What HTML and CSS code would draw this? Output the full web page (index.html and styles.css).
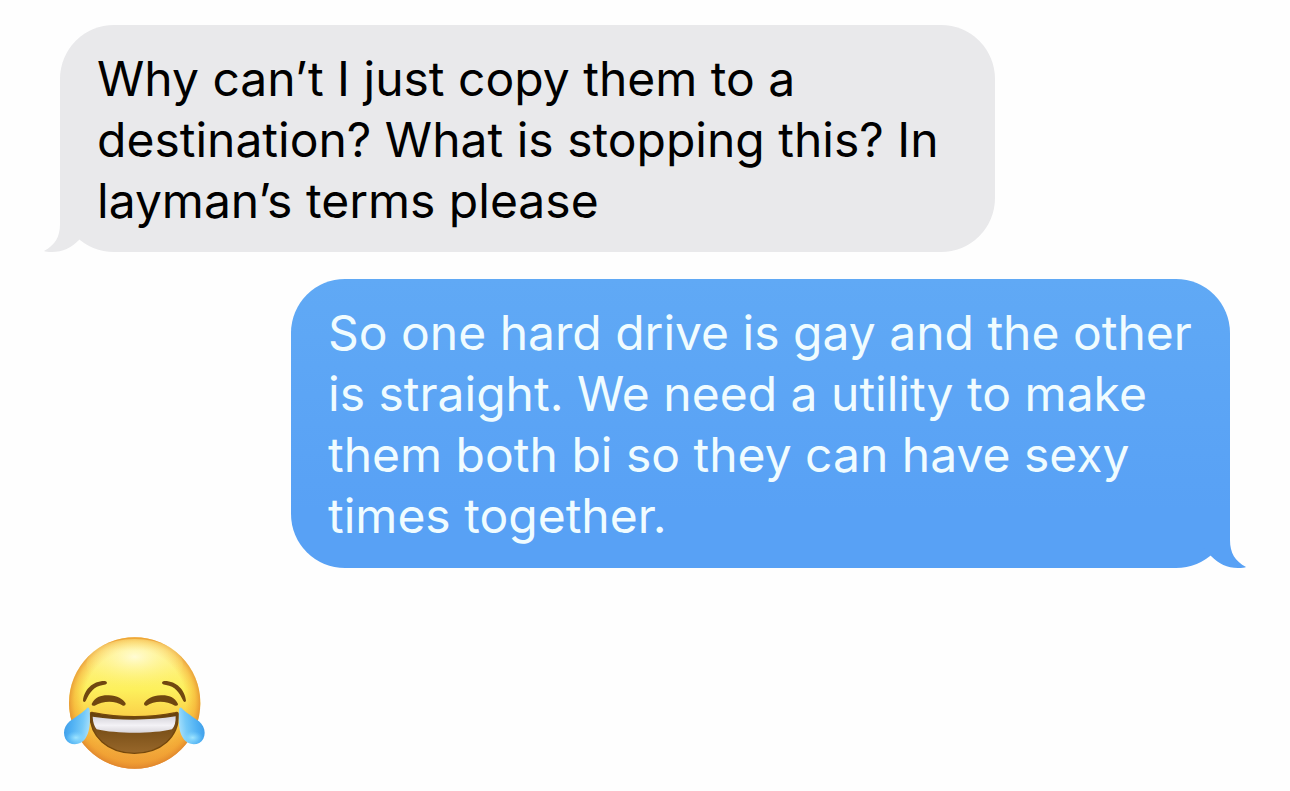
FILE: index.html
```html
<!DOCTYPE html>
<html lang="en">
<head>
<meta charset="utf-8">
<meta name="viewport" content="width=device-width, initial-scale=1">
<title>Messages</title>
<link rel="stylesheet" href="styles.css">
</head>
<body>
<main class="thread">
  <div class="bubble bubble-received">
    <p class="message">Why can’t I just copy them to a destination? What is stopping this? In layman’s terms please</p>
    <svg class="tail" viewBox="0 0 70 58" aria-hidden="true"><path d="M16 0V30C16 43 11 51 0 57Q2 58 8 58C19 58 27 54 35 46L50 30V0Z"/></svg>
  </div>
  <div class="bubble bubble-sent">
    <p class="message">So one hard drive is gay and the other is straight. We need a utility to make them both bi so they can have sexy times together.</p>
    <svg class="tail" viewBox="0 0 70 58" aria-hidden="true"><path d="M16 0V30C16 43 11 51 0 57Q2 58 8 58C19 58 27 54 35 46L50 30V0Z"/></svg>
  </div>
  <svg class="emoji" viewBox="39 30 429 411" role="img" aria-label="Face with tears of joy">
    <defs>
      <linearGradient id="face" x1="0" y1="0" x2="0" y2="1">
        <stop offset="0" stop-color="#fbd04a"/>
        <stop offset=".1" stop-color="#fff391"/>
        <stop offset=".4" stop-color="#fdf05c"/>
        <stop offset=".65" stop-color="#fac944"/>
        <stop offset="1" stop-color="#ec9538"/>
      </linearGradient>
      <radialGradient id="rim" cx=".5" cy=".49" r=".51">
        <stop offset=".76" stop-color="#f5a62c" stop-opacity="0"/>
        <stop offset=".9" stop-color="#f2a02e" stop-opacity=".5"/>
        <stop offset="1" stop-color="#df842c" stop-opacity=".9"/>
      </radialGradient>
      <radialGradient id="shine" cx=".5" cy=".35" r=".6">
        <stop offset="0" stop-color="#fffcd8" stop-opacity=".95"/>
        <stop offset="1" stop-color="#fff27a" stop-opacity="0"/>
      </radialGradient>
      <linearGradient id="teeth" x1="0" y1="0" x2="0" y2="1">
        <stop offset="0" stop-color="#d5d3da"/>
        <stop offset=".55" stop-color="#f3f2f6"/>
        <stop offset="1" stop-color="#d8d5da"/>
      </linearGradient>
      <linearGradient id="mouth" x1="0" y1="0" x2="0" y2="1">
        <stop offset="0" stop-color="#65400c"/>
        <stop offset="1" stop-color="#98672a"/>
      </linearGradient>
      <linearGradient id="tear" x1="0" y1=".4" x2="1" y2=".6">
        <stop offset="0" stop-color="#3f9de8"/>
        <stop offset=".3" stop-color="#4fb0f3"/>
        <stop offset=".7" stop-color="#74c9f8"/>
        <stop offset="1" stop-color="#a9e0fb"/>
      </linearGradient>
      <radialGradient id="glint">
        <stop offset="0" stop-color="#a6e9ff" stop-opacity=".9"/>
        <stop offset="1" stop-color="#7bd3ff" stop-opacity="0"/>
      </radialGradient>
    </defs>
    <circle cx="254" cy="234" r="197" fill="url(#face)"/>
    <circle cx="254" cy="234" r="197" fill="url(#rim)"/>
    <ellipse cx="254" cy="118" rx="145" ry="76" fill="url(#shine)"/>
    <g fill="#704710">
      <path d="M99 227C102 195 128 167 165 168Q173 170 170 176Q168 179 159 180C132 183 119 203 107 228Q102 234 99 227Z"/>
      <path d="M408 227C405 195 379 167 342 168Q334 170 337 176Q339 179 348 180C375 183 388 203 400 228Q405 234 408 227Z"/>
      <path d="M125 237C135 215 156 210 176 211C202 212 219 222 227 235Q228 244 219 242C195 226 160 227 134 242Q124 244 125 237Z"/>
      <path d="M384 237C374 215 353 210 333 211C307 212 290 222 282 235Q281 244 290 242C314 226 349 227 375 242Q385 244 384 237Z"/>
    </g>
    <path d="M120 267Q121 260 130 263C208 279 300 279 376 263Q385 260 385 268C387 336 333 384 253 385C173 384 119 334 120 267Z" fill="url(#mouth)" stroke="#74470c" stroke-width="4"/>
    <path d="M128 275C210 287 296 287 377 274Q378 300 366 313C310 327 198 327 140 313Q129 299 128 275Z" fill="url(#teeth)"/>
    <path id="drop" d="M112 248Q118 245 119 255C121 292 120 318 107 339C91 364 58 363 46 341C37 320 44 303 59 289C80 273 100 262 112 248Z" fill="url(#tear)"/>
    <use href="#drop" transform="matrix(-1 0 0 1 506 0)"/>
    <g fill="url(#glint)">
      <ellipse cx="78" cy="338" rx="31" ry="20"/>
      <ellipse cx="428" cy="338" rx="31" ry="20"/>
    </g>
  </svg>
</main>
</body>
</html>
```

FILE: styles.css
```css
* {
  box-sizing: border-box;
}

body {
  margin: 0;
  background: #fefefe;
  font-family: Inter, "Liberation Sans", sans-serif;
}

.thread {
  display: flex;
  flex-direction: column;
  align-items: flex-start;
  padding: 25px 60px 19px;
}

.bubble {
  position: relative;
  isolation: isolate;
  max-width: min(100%, 935px);
  padding: 23px 34px 21px 37px;
  border-radius: 54px;
  font-size: 48px;
  line-height: 61px;
}

.bubble-received {
  background: #e9e9eb;
  color: #000;
}

.bubble-sent {
  align-self: flex-end;
  max-width: min(100%, 939px);
  margin-top: 27px;
  padding-bottom: 22px;
  background: linear-gradient(#60a9f5, #58a1f5 80%);
  color: #f0fcff;
}

.message {
  margin: 0;
}

.tail {
  position: absolute;
  z-index: -1;
  bottom: 0;
  left: -16px;
  width: 70px;
  height: 58px;
  fill: #e9e9eb;
}

.bubble-sent .tail {
  left: auto;
  right: -16px;
  fill: #58a1f5;
  transform: scaleX(-1);
}

.emoji {
  width: 143px;
  height: 137px;
  margin-top: 67px;
  margin-left: 3px;
}
```
